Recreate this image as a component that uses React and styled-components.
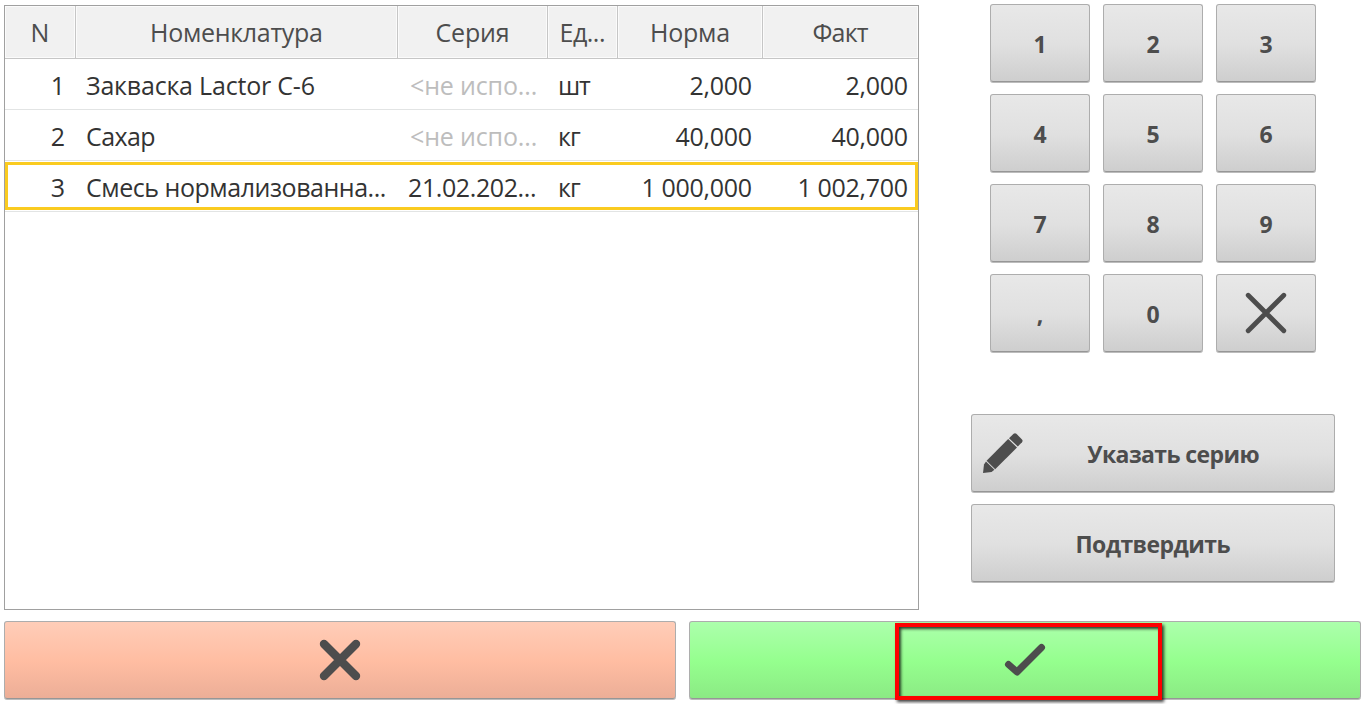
import React from "react";
import styled, { createGlobalStyle, css } from "styled-components";

const GlobalStyle = createGlobalStyle`
  * { box-sizing: border-box; }
  body { margin: 0; background: #fff; overflow: hidden; }
`;

const Screen = styled.div`
  width: 1370px;
  height: 704px;
  padding: 4px 9px 0 4px;
  display: flex;
  flex-direction: column;
  gap: 11px;
  font-family: "Open Sans", "Noto Sans", sans-serif;
  color: #333;
`;

const Main = styled.div`
  display: flex;
  justify-content: space-between;
  height: 606px;
`;

const Table = styled.div`
  width: 915px;
  height: 605px;
  margin-top: 1px;
  border: 1px solid #a0a0a0;
`;

const Row = styled.div`
  display: grid;
  grid-template-columns: 71px 322px 150px 70px 145px 155px;
  height: 51px;
  border-bottom: 1px solid #e2e4e4;
  ${(p) =>
    p.$selected &&
    css`
      background:
        linear-gradient(#fff, #fff) 3px 4px / 907px 42px no-repeat,
        linear-gradient(#facb20, #facb20) 0 1px / 913px 48px no-repeat;
    `}
`;

const HeaderRow = styled(Row)`
  height: 53px;
  border-bottom-color: #c6c6c6;
`;

const HeaderCell = styled.div`
  display: flex;
  align-items: center;
  justify-content: center;
  border-right: 1px solid #c6c6c6;
  background: #f1f1f1;
  box-shadow: inset 0 0 0 1px #fbfbfb;
  color: #4d4d4d;
  font-size: 25px;
  line-height: 34px;
  white-space: pre;
  padding-bottom: 1px;
  &:last-child { border-right: 0; }
`;

const Cell = styled.div`
  display: flex;
  align-items: center;
  justify-content: ${(p) => (p.$right ? "flex-end" : "flex-start")};
  padding: 2px ${(p) => p.$end || 11}px 0 ${(p) => (p.$muted ? 12 : 10)}px;
  font-size: 25px;
  line-height: 34px;
  white-space: pre;
  color: ${(p) => (p.$muted ? "#bdbdbd" : "#333")};
`;

const Label = styled.span`
  letter-spacing: ${(p) => p.$track || 0}px;
  margin-right: ${(p) => -(p.$track || 0)}px;
`;

const Side = styled.div`
  width: 364px;
  margin-right: 26px;
  display: flex;
  flex-direction: column;
  gap: 61px;
`;

const Keypad = styled.div`
  display: grid;
  grid-template-columns: repeat(3, 100px);
  grid-auto-rows: 79px;
  gap: 11px 13px;
  margin-left: 19px;
`;

const Actions = styled.div`
  display: grid;
  grid-auto-rows: 79px;
  gap: 11px;
`;

const tones = {
  grey: "#e8e8e8, #e0e0e0 52%, #cecece",
  peach: "#ffcdb8, #ffbda2 52%, #ecae97",
  green: "#acffac, #95ff8e 52%, #8bea84",
};

const Button = styled.button`
  position: relative;
  display: flex;
  align-items: center;
  justify-content: center;
  height: 78px;
  padding: 1px 0 0;
  border: 1px solid #adadad;
  border-bottom-color: #969696;
  border-radius: 3px;
  background: linear-gradient(${(p) => tones[p.$tone || "grey"]});
  box-shadow: 0 1px 0 #bcbcbc;
  font: bold 23px/32px "Open Sans", "Noto Sans", sans-serif;
  color: #4d4d4d;
  white-space: pre;
`;

const IconButton = styled(Button)`
  padding: 0;
`;

const EditButton = styled(Button)`
  display: grid;
  grid-template-columns: 60px 1fr 19px;
`;

const Footer = styled.div`
  display: grid;
  grid-template-columns: 672px 672px;
  gap: 13px;
`;

const Highlight = styled.div`
  position: absolute;
  left: 205px;
  top: 1px;
  width: 267px;
  height: 77px;
  border: 4px solid #fe0000;
  box-shadow: 2px 2px 3px rgba(0, 0, 0, 0.75), inset 2px 2px 3px rgba(0, 0, 0, 0.75);
`;

const Icon = styled.svg`
  width: 42px;
  height: 42px;
  display: block;
  fill: none;
  stroke: #4d4d4d;
  stroke-linecap: round;
  stroke-linejoin: round;
`;

const PencilIcon = styled(Icon)`
  margin: -1px 0 0 10px;
  fill: #4d4d4d;
  stroke: none;
`;

const columns = [["N", 0], ["Номенклатура", -0.3], ["Серия", -0.15], ["Ед...", -0.5], ["Норма", -0.2], ["Факт", -0.8]];

const rows = [
  { n: "1", name: ["Закваска Lactor С-6", -0.2], series: ["<не испо...", -0.15], unit: ["шт", -1.2], norm: "2,000", fact: "2,000" },
  { n: "2", name: ["Сахар", -0.6], series: ["<не испо...", -0.15], unit: ["кг", -0.8], norm: "40,000", fact: "40,000" },
  { n: "3", name: ["Смесь нормализованна...", -0.46], series: ["21.02.202...", -0.4], unit: ["кг", -0.8], norm: "1 000,000", fact: "1 002,700", selected: true },
];

const keys = ["1", "2", "3", "4", "5", "6", "7", "8", "9", ",", "0"];

export default function App() {
  return (
    <Screen>
      <GlobalStyle />
      <Main>
        <Table>
          <HeaderRow>
            {columns.map(([title, track]) => (
              <HeaderCell key={title}><Label $track={track}>{title}</Label></HeaderCell>
            ))}
          </HeaderRow>
          {rows.map((r) => (
            <Row key={r.n} $selected={r.selected}>
              <Cell $right>{r.n}</Cell>
              <Cell><Label $track={r.name[1]}>{r.name[0]}</Label></Cell>
              <Cell $muted={!r.selected}><Label $track={r.series[1]}>{r.series[0]}</Label></Cell>
              <Cell><Label $track={r.unit[1]}>{r.unit[0]}</Label></Cell>
              <Cell $right><Label $track={-0.3}>{r.norm}</Label></Cell>
              <Cell $right $end={10}><Label $track={-0.3}>{r.fact}</Label></Cell>
            </Row>
          ))}
        </Table>
        <Side>
          <Keypad>
            {keys.map((k) => <Button key={k}>{k}</Button>)}
            <IconButton>
              <Icon viewBox="0 0 42 42" strokeWidth="4.8"><path d="M3.2 3.2L38.8 38.8M38.8 3.2L3.2 38.8" /></Icon>
            </IconButton>
          </Keypad>
          <Actions>
            <EditButton>
              <PencilIcon viewBox="0 0 42 42">
                <path d="M31.6 1.8Q33 0.6 34.4 1.8L40 7.4Q41.2 8.8 40 10.2L35.8 14.6L27 6.2Z" />
                <path d="M26.2 7L35 15.4L13.2 37.2L4.6 28.8Z" />
                <path d="M4 29.6L12.4 37.8L9.6 40L1 41L2 32.6Z" />
              </PencilIcon>
              <Label $track={-0.6}>Указать серию</Label>
            </EditButton>
            <Button><Label $track={-0.55}>Подтвердить</Label></Button>
          </Actions>
        </Side>
      </Main>
      <Footer>
        <IconButton $tone="peach">
          <Icon viewBox="0 0 42 42" strokeWidth="8.4"><path d="M5 5L37 37M37 5L5 37" /></Icon>
        </IconButton>
        <IconButton $tone="green">
          <Icon viewBox="0 0 42 42" strokeWidth="7"><path d="M4.5 25.5L13 33L37.5 8.5" /></Icon>
          <Highlight />
        </IconButton>
      </Footer>
    </Screen>
  );
}
